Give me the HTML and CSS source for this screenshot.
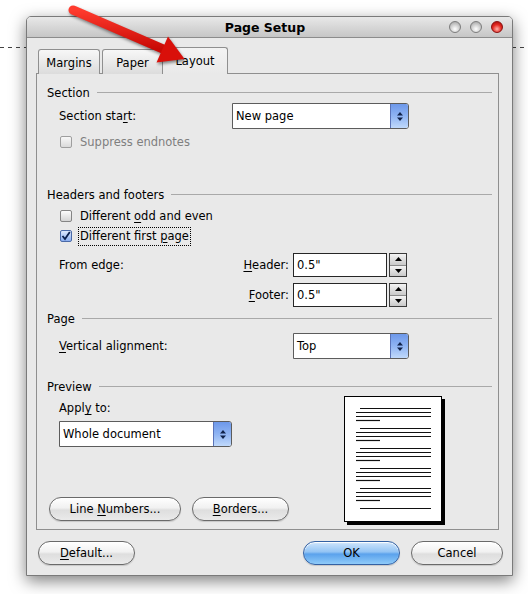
FILE: index.html
```html
<!DOCTYPE html>
<html lang="en">
<head>
  <meta charset="UTF-8" />
  <title>Page Setup</title>
  <link rel="stylesheet" href="styles.css">
</head>
<body>
  <svg class="arrow" width="528" height="100" viewBox="0 0 528 100">
    <defs>
      <linearGradient id="red" x1="0" y1="0" x2="0" y2="1">
        <stop offset="0" stop-color="#ff3b2e"/>
        <stop offset="1" stop-color="#c80a05"/>
      </linearGradient>
    </defs>
    <line x1="73" y1="10" x2="163" y2="49" stroke="url(#red)" stroke-width="9" stroke-linecap="round"/>
    <polygon points="168,36.5 156.5,62.5 184.5,59" fill="#d9100a"/>
  </svg>

  <div class="window">
    <div class="titlebar">
      <div></div>
      <div class="title">Page Setup</div>
      <div class="controls">
        <span class="light"></span>
        <span class="light"></span>
        <span class="light close"></span>
      </div>
    </div>

    <div class="content">
      <div class="tabs">
        <div class="tab t-margins">Margins</div>
        <div class="tab t-paper">Paper</div>
        <div class="tab t-layout active">Layout</div>
      </div>

      <div class="panel">
        <div class="group-title">Section</div>
        <div class="row row-select mt3">
          <span class="label col-a">Section sta<u>r</u>t:</span>
          <div class="select w-start">
            <span class="select-text">New page</span>
            <span class="select-btn"><svg width="6" height="9" viewBox="0 0 6 9"><polygon points="0,3.5 3,0 6,3.5" /><polygon points="0,5.5 3,9 6,5.5" /></svg></span>
          </div>
        </div>
        <div class="check-row disabled mt5 h16">
          <span class="check"></span>
          <span class="check-label">Suppress endnotes</span>
        </div>

        <div class="group-title mt36">Headers and footers</div>
        <div class="check-row mt4">
          <span class="check"></span>
          <span class="check-label">Different <u>o</u>dd and even</span>
        </div>
        <div class="check-row">
          <span class="check checked"><svg width="10" height="10" viewBox="0 0 10 10"><path d="M1.5 5 L4 8 L8.8 1" fill="none" stroke="#0a1f4d" stroke-width="1.8"/></svg></span>
          <span class="check-label focus">Different first <u>p</u>age</span>
        </div>
        <div class="row row-edge mt7">
          <span class="label col-a">From edge:</span>
          <span class="label col-b"><u>H</u>eader:</span>
          <div class="spin-input">0.5"</div>
          <div class="spinner">
            <span class="spin-up"><svg width="7" height="4" viewBox="0 0 7 4"><polygon points="0,4 3.5,0 7,4"/></svg></span>
            <span class="spin-down"><svg width="7" height="4" viewBox="0 0 7 4"><polygon points="0,0 3.5,4 7,0"/></svg></span>
          </div>
        </div>
        <div class="row row-edge mt6">
          <span class="label col-a"></span>
          <span class="label col-b"><u>F</u>ooter:</span>
          <div class="spin-input">0.5"</div>
          <div class="spinner">
            <span class="spin-up"><svg width="7" height="4" viewBox="0 0 7 4"><polygon points="0,4 3.5,0 7,4"/></svg></span>
            <span class="spin-down"><svg width="7" height="4" viewBox="0 0 7 4"><polygon points="0,0 3.5,4 7,0"/></svg></span>
          </div>
        </div>

        <div class="group-title mt3">Page</div>
        <div class="row row-select mt7">
          <span class="label col-v"><u>V</u>ertical alignment:</span>
          <div class="select w-top">
            <span class="select-text">Top</span>
            <span class="select-btn"><svg width="6" height="9" viewBox="0 0 6 9"><polygon points="0,3.5 3,0 6,3.5" /><polygon points="0,5.5 3,9 6,5.5" /></svg></span>
          </div>
        </div>

        <div class="group-title mt19">Preview</div>
        <div class="preview">
          <div class="preview-left">
            <div class="label apply">Appl<u>y</u> to:</div>
            <div class="select w-apply">
              <span class="select-text">Whole document</span>
              <span class="select-btn"><svg width="6" height="9" viewBox="0 0 6 9"><polygon points="0,3.5 3,0 6,3.5" /><polygon points="0,5.5 3,9 6,5.5" /></svg></span>
            </div>
            <div class="panel-buttons">
              <button class="btn w-line">Line <u>N</u>umbers...</button>
              <button class="btn w-borders"><u>B</u>orders...</button>
            </div>
          </div>
          <div class="page">
            <svg width="96" height="124" viewBox="0 0 96 124">
              <g stroke="#111" stroke-width="1.2">
                <line x1="15" y1="11.5" x2="86" y2="11.5"/><line x1="11" y1="15.5" x2="86" y2="15.5"/><line x1="11" y1="19.5" x2="86" y2="19.5"/><line x1="11" y1="23.5" x2="35" y2="23.5"/>
                <line x1="15" y1="31.5" x2="86" y2="31.5"/><line x1="11" y1="35.5" x2="86" y2="35.5"/><line x1="11" y1="39.5" x2="86" y2="39.5"/><line x1="11" y1="43.5" x2="35" y2="43.5"/>
                <line x1="15" y1="51.5" x2="86" y2="51.5"/><line x1="11" y1="55.5" x2="86" y2="55.5"/><line x1="11" y1="59.5" x2="86" y2="59.5"/><line x1="11" y1="63.5" x2="35" y2="63.5"/>
                <line x1="15" y1="71.5" x2="86" y2="71.5"/><line x1="11" y1="75.5" x2="86" y2="75.5"/><line x1="11" y1="79.5" x2="86" y2="79.5"/><line x1="11" y1="83.5" x2="35" y2="83.5"/>
                <line x1="15" y1="91.5" x2="86" y2="91.5"/><line x1="11" y1="95.5" x2="86" y2="95.5"/><line x1="11" y1="99.5" x2="86" y2="99.5"/><line x1="11" y1="103.5" x2="35" y2="103.5"/>
                <line x1="15" y1="111.5" x2="86" y2="111.5"/>
              </g>
            </svg>
          </div>
        </div>
      </div>

      <div class="dialog-buttons">
        <button class="btn w-default"><u>D</u>efault...</button>
        <div class="spacer"></div>
        <button class="btn primary w-ok">OK</button>
        <button class="btn w-cancel">Cancel</button>
      </div>
    </div>
  </div>
</body>
</html>
```

FILE: styles.css
```css
:root {
  --face: #e9e9e9;
  --edge: #8f8f8f;
  --rule: #a9a9a9;
  --text: #000000;
}

body {
  margin: 0;
  width: 528px;
  height: 594px;
  overflow: hidden;
  position: relative;
  box-sizing: border-box;
  padding: 16px 0 0 26px;
  font-family: "DejaVu Sans", Verdana, sans-serif;
  font-size: 11.5px;
  color: var(--text);
  background: repeating-linear-gradient(90deg, #444 0 4px, transparent 4px 8px) 0 47px / 100% 1px no-repeat, #ffffff;
}

u {
  text-decoration-thickness: 1px;
  text-underline-offset: 2px;
}

.arrow {
  position: absolute;
  top: 0;
  left: 0;
  z-index: 10;
  pointer-events: none;
  filter: drop-shadow(1px 2px 1.5px rgba(0, 0, 0, 0.45));
}

.window {
  width: 487px;
  height: 560px;
  box-sizing: border-box;
  border: 1px solid #7a7a7a;
  border-radius: 5px 5px 0 0;
  background-color: var(--face);
  box-shadow: 0 5px 16px rgba(0, 0, 0, 0.5);
}

.titlebar {
  height: 20px;
  display: grid;
  grid-template-columns: 1fr auto 1fr;
  align-items: center;
  border-bottom: 1px solid #8c8c8c;
  border-radius: 4px 4px 0 0;
  background: linear-gradient(#e8e8e8, #c6c6c6);
}

.title {
  font-weight: bold;
  font-size: 12.5px;
  padding-right: 9px;
  padding-top: 1px;
}

.controls {
  justify-self: end;
  display: flex;
  gap: 9px;
  padding-right: 9px;
}

.light {
  width: 12px;
  height: 12px;
  box-sizing: border-box;
  border-radius: 50%;
  border: 1px solid #7d7d7d;
  background: radial-gradient(circle at 50% 70%, #ffffff 0, #d4d4d4 45%, #9a9a9a 100%);
}

.light.close {
  border-color: #8a1010;
  background: radial-gradient(circle at 50% 70%, #ffb0a8 0, #e52a22 50%, #9c0404 100%);
}

.content {
  padding: 9px 13px 0 9px;
}

.tabs {
  display: flex;
  align-items: flex-end;
  height: 27px;
  margin: 0 0 -1px 2px;
}

.tab {
  height: 25px;
  box-sizing: border-box;
  display: flex;
  align-items: center;
  justify-content: center;
  border: 1px solid var(--edge);
  border-bottom: none;
  border-radius: 3px 3px 0 0;
  background: linear-gradient(#f7f7f7, #dcdcdc);
  padding-top: 2px;
}

.t-margins { width: 62px; }
.t-paper { width: 61px; margin-left: 2px; }
.t-layout { width: 66px; margin-left: -1px; }

.tab.active {
  position: relative;
  height: 27px;
  background: linear-gradient(#f3f3f3, var(--face));
  padding-bottom: 2px;
}

.panel {
  height: 457px;
  box-sizing: border-box;
  border: 1px solid var(--edge);
  padding: 10px 6px 0 10px;
}

.group-title {
  height: 16px;
  display: flex;
  align-items: center;
  gap: 7px;
  padding-top: 1px;
  box-sizing: border-box;
}

.group-title::after {
  content: "";
  flex: 1;
  height: 1px;
  background-color: var(--rule);
}

.mt3 { margin-top: 3px; }
.mt4 { margin-top: 4px; }
.mt5 { margin-top: 5px; }
.mt6 { margin-top: 6px; }
.mt7 { margin-top: 7px; }
.mt19 { margin-top: 19px; }
.mt36 { margin-top: 36px; }

.row {
  display: flex;
  align-items: center;
  padding-left: 12px;
}

.row-select { height: 26px; }
.row-edge { height: 24px; }

.col-a { width: 173px; }
.col-v { width: 234px; }
.col-b { width: 57px; text-align: right; margin-right: 4px; }

.select {
  height: 26px;
  box-sizing: border-box;
  display: flex;
  border: 1px solid #5c5c5c;
  border-radius: 0 3px 3px 0;
  background-color: #ffffff;
}

.w-start { width: 177px; }
.w-top { width: 116px; }
.w-apply { width: 173px; }

.select-text {
  flex: 1;
  display: flex;
  align-items: center;
  padding-left: 3px;
}

.select-btn {
  width: 17px;
  display: flex;
  align-items: center;
  justify-content: center;
  border-left: 1px solid #5a73b8;
  border-radius: 0 2px 2px 0;
  background: linear-gradient(#6d98ea, #8fb4f3 50%, #c0d9fb);
}

.select-btn polygon { fill: #10224a; }

.check-row {
  height: 20px;
  display: flex;
  align-items: center;
  padding-left: 13px;
  gap: 6px;
}

.check-row.h16 { height: 16px; }

.check {
  width: 12px;
  height: 12px;
  box-sizing: border-box;
  border: 1px solid #858585;
  border-radius: 2px;
  background: linear-gradient(#fdfdfd, #d5d5d5);
  display: flex;
  align-items: center;
  justify-content: center;
}

.check.checked {
  border-color: #4a6aa8;
  background: linear-gradient(#dce8fd, #8aaef0);
}

.check-label {
  border: 1px solid transparent;
  padding: 0 1px;
  line-height: 17px;
}

.check-label.focus {
  border: 1px dotted #000000;
}

.disabled .check-label { color: #7f7f7f; }
.disabled .check { opacity: 0.75; }

.spin-input {
  width: 94px;
  height: 24px;
  box-sizing: border-box;
  border: 1px solid #262626;
  background-color: #ffffff;
  display: flex;
  align-items: center;
  padding-left: 3px;
}

.spinner {
  width: 18px;
  height: 24px;
  margin-left: 2px;
  box-sizing: border-box;
  border: 1px solid #3a3a3a;
  display: flex;
  flex-direction: column;
}

.spinner span {
  flex: 1;
  display: flex;
  align-items: center;
  justify-content: center;
  background: linear-gradient(#f4f4f4, #c9c9c9);
}

.spin-up { border-bottom: 1px solid #8a8a8a; }
.spinner polygon { fill: #000000; }

.preview {
  height: 128px;
  display: grid;
  grid-template-columns: 297px auto;
}

.preview-left {
  display: flex;
  flex-direction: column;
  padding-left: 12px;
}

.apply {
  height: 16px;
  line-height: 16px;
  margin: 6px 0 5px;
}

.panel-buttons {
  margin: auto 0 1px -10px;
  display: flex;
  gap: 11px;
}

.page {
  margin-top: 2px;
  width: 98px;
  height: 126px;
  box-sizing: border-box;
  border: 1px solid #000000;
  background-color: #ffffff;
  box-shadow: 3px 3px 0 #000000;
}

.page svg { display: block; }

.btn {
  height: 24px;
  box-sizing: border-box;
  border: 1px solid #6a6a6a;
  border-radius: 12px;
  padding: 0;
  font-family: inherit;
  font-size: 11.5px;
  color: var(--text);
  background: linear-gradient(#ffffff, #f1f1f1 45%, #dedede 55%, #eaeaea);
  box-shadow: inset 0 1px 1px #ffffff, 0 1px 1px rgba(0, 0, 0, 0.15);
}

.btn.primary {
  border-color: #3461a3;
  background: linear-gradient(#cfe5fc, #93c4f4 45%, #5ba2ec 55%, #8fcbf9);
}

.w-line { width: 132px; }
.w-borders { width: 97px; }
.w-default { width: 97px; }
.w-ok { width: 97px; }
.w-cancel { width: 92px; margin-left: 11px; }

.dialog-buttons {
  display: flex;
  margin: 11px -4px 0 2px;
}

.spacer { flex: 1; }
```
